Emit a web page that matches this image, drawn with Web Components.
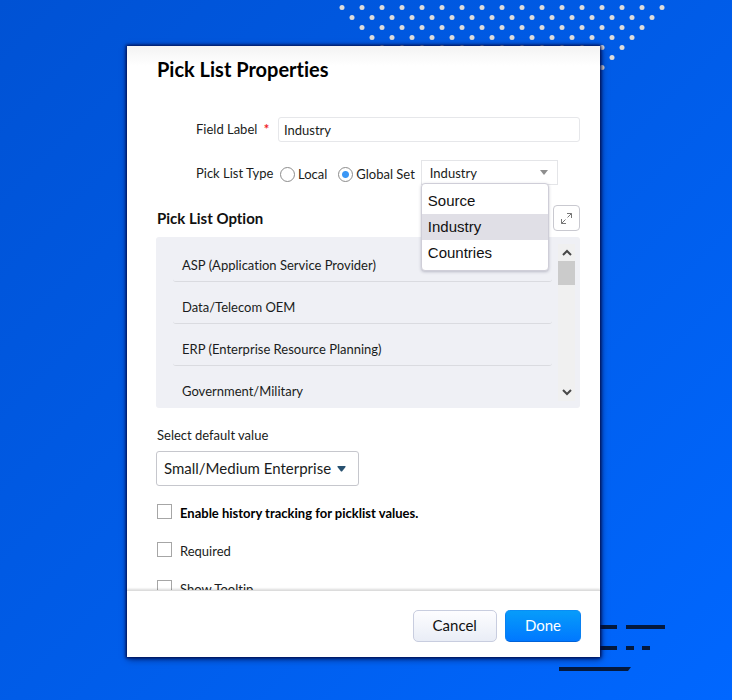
<!DOCTYPE html>
<html lang="en">
<head>
  <meta charset="utf-8">
  <title>Pick List Properties</title>
  <style>
    body {
      margin: 0;
      font-family: Lato, "Liberation Sans", sans-serif;
      font-size: 13px;
      font-variant-ligatures: none;
      color: #1a1c20;
    }
  </style>
</head>
<body>
  <page-stage>
    <properties-dialog heading="Pick List Properties">
      <text-field label="Field Label" value="Industry"></text-field>
      <picklist-type></picklist-type>
      <option-panel heading="Pick List Option">
        <option-row>ASP (Application Service Provider)</option-row>
        <option-row>Data/Telecom OEM</option-row>
        <option-row>ERP (Enterprise Resource Planning)</option-row>
        <option-row>Government/Military</option-row>
      </option-panel>
      <default-value label="Select default value" value="Small/Medium Enterprise"></default-value>
      <check-field strong>Enable history tracking for picklist values.</check-field>
      <check-field>Required</check-field>
      <check-field>Show Tooltip</check-field>
      <action-button slot="actions">Cancel</action-button>
      <action-button slot="actions" primary>Done</action-button>
    </properties-dialog>
  </page-stage>

  <script>
    class PageStage extends HTMLElement {
      connectedCallback() {
        this.attachShadow({ mode: 'open' });
        // triangle of dots, each row is one dot shorter than the last
        let dots = '';
        for (let row = 0; row < 7; row++) {
          for (let x = 4 + row * 10; x <= 324 - row * 10; x += 20) {
            dots += `<circle cx="${x}" cy="${7.5 + row * 10}" r="2.5"/>`;
          }
        }
        this.shadowRoot.innerHTML = `
          <style>
            :host {
              display: grid;
              position: relative;
              box-sizing: border-box;
              height: 100vh;
              padding: 46px 132px 43px 127px;
              background: linear-gradient(135deg, #0052d4, #005ce8 50%, #0067ff);
              overflow: hidden;
            }
            svg {
              position: absolute;
            }
            .dots {
              top: 0;
              right: 66px;
              fill: #dcdcdc;
            }
            .dashes {
              right: 66px;
              bottom: 28px;
              fill: #04193d;
            }
            ::slotted(*) {
              position: relative;
              min-height: 0;
            }
          </style>
          <svg class="dots" width="328" height="72" aria-hidden="true">${dots}</svg>
          <svg class="dashes" width="107" height="48" aria-hidden="true">
            <path d="M30 1h28v4H30zM67 1h39v4H67zM30 22h28v4H30zM67 22h8v4h-8zM83 22h8v4h-8zM0 43h72l-3 4H0z"/>
          </svg>
          <slot></slot>
        `;
      }
    }

    class PropertiesDialog extends HTMLElement {
      connectedCallback() {
        this.attachShadow({ mode: 'open' });
        this.shadowRoot.innerHTML = `
          <style>
            :host {
              display: flex;
              flex-direction: column;
              background: white;
              box-shadow: 0 0 3px 1px #000d4d, 1px 2px 7px rgba(0, 0, 40, 0.6);
            }
            main {
              flex: 1;
              min-height: 0;
              overflow: hidden;
              padding: 11px 20px 0 30px;
              background: linear-gradient(#f3f3f3, white 20px);
            }
            h1 {
              margin: 0 0 35px;
              font-size: 20px;
              line-height: 25px;
              color: #000;
            }
            footer {
              display: flex;
              justify-content: flex-end;
              gap: 8px;
              padding: 19px 19px 15px;
              border-top: 1px solid #dcdcdc;
              box-shadow: 0 -1px 2px rgba(0, 0, 0, 0.15);
              background: white;
            }
          </style>
          <main>
            <h1>${this.getAttribute('heading')}</h1>
            <slot></slot>
          </main>
          <footer><slot name="actions"></slot></footer>
        `;
      }
    }

    class TextField extends HTMLElement {
      connectedCallback() {
        this.attachShadow({ mode: 'open' });
        this.shadowRoot.innerHTML = `
          <style>
            :host {
              display: grid;
              grid-template-columns: 82px 1fr;
              align-items: center;
              padding-left: 39px;
              margin-bottom: 18px;
            }
            label {
              line-height: 18px;
              padding-bottom: 2px;
            }
            span {
              color: #f01e28;
              margin-left: 3px;
              font-weight: bold;
            }
            input {
              box-sizing: border-box;
              width: 100%;
              height: 25px;
              padding: 0 5px;
              border: 1px solid #e6e7ea;
              border-radius: 3px;
              background: white;
              font: inherit;
              color: inherit;
            }
          </style>
          <label for="field">${this.getAttribute('label')} <span>*</span></label>
          <input id="field" type="text" value="${this.getAttribute('value')}">
        `;
      }
    }

    class PicklistType extends HTMLElement {
      connectedCallback() {
        this.attachShadow({ mode: 'open' });
        this.shadowRoot.innerHTML = `
          <style>
            :host {
              display: flex;
              align-items: center;
              padding-left: 39px;
              margin-bottom: 20px;
            }
            .title {
              width: 84px;
              line-height: 18px;
            }
            label {
              display: flex;
              align-items: center;
              gap: 3px;
              margin-right: 11px;
              padding-top: 3px;
              line-height: 18px;
            }
            input {
              appearance: none;
              box-sizing: border-box;
              width: 15px;
              height: 15px;
              margin: 0;
              border: 1px solid #8c8c8c;
              border-radius: 50%;
              background: white;
            }
            input:checked {
              background: radial-gradient(circle, #3b97f5 3px, white 4px);
            }
            .picker {
              position: relative;
              width: 137px;
              margin-left: -5px;
            }
            select {
              appearance: none;
              display: block;
              box-sizing: border-box;
              width: 100%;
              height: 25px;
              padding: 0 8px;
              border: 1px solid #e4e5e8;
              border-radius: 0;
              background: white;
              font: inherit;
              color: inherit;
            }
            .caret {
              position: absolute;
              top: 10px;
              right: 10px;
              fill: #8e8e8e;
            }
            ul {
              position: absolute;
              z-index: 2;
              top: 23px;
              left: 0;
              box-sizing: border-box;
              width: 128px;
              margin: 0;
              padding: 4px 0;
              border: 1px solid #cfced8;
              border-radius: 4px;
              background: white;
              box-shadow: 0 1px 3px rgba(60, 60, 90, 0.3);
              list-style: none;
              font: 15px/26px "Liberation Sans", sans-serif;
              color: #111;
            }
            li {
              padding: 0 6px;
            }
            li[aria-selected="true"] {
              background: #e0dfe6;
            }
          </style>
          <div class="title">Pick List Type</div>
          <label><input type="radio" name="type">Local</label>
          <label><input type="radio" name="type" checked>Global Set</label>
          <div class="picker">
            <select aria-label="Global set">
              <option>Source</option>
              <option selected>Industry</option>
              <option>Countries</option>
            </select>
            <svg class="caret" width="8" height="5" aria-hidden="true"><path d="M0 0h8L4 5z"/></svg>
            <ul role="listbox" aria-label="Global set">
              <li role="option">Source</li>
              <li role="option" aria-selected="true">Industry</li>
              <li role="option">Countries</li>
            </ul>
          </div>
        `;
      }
    }

    class OptionPanel extends HTMLElement {
      connectedCallback() {
        this.attachShadow({ mode: 'open' });
        this.shadowRoot.innerHTML = `
          <style>
            :host {
              display: block;
              margin: 0 0 18px -1px;
            }
            header {
              display: flex;
              justify-content: space-between;
              align-items: center;
              margin-bottom: 6px;
            }
            h2 {
              margin: 0 0 0 1px;
              font-size: 15px;
              line-height: 20px;
              color: #111;
            }
            button {
              display: grid;
              place-items: center;
              width: 27px;
              height: 26px;
              padding: 0;
              border: 1px solid #c9c9d0;
              border-radius: 4px;
              background: white;
            }
            button svg {
              fill: none;
              stroke: #777;
            }
            .panel {
              display: grid;
              grid-template-columns: 1fr 17px;
              gap: 6px;
              box-sizing: border-box;
              height: 171px;
              padding: 3px 5px 0 17px;
              border-radius: 3px;
              background: #eff0f5;
              overflow: hidden;
            }
            ::slotted(:last-of-type) {
              border-bottom-color: transparent;
            }
            .bar {
              display: flex;
              flex-direction: column;
              align-items: center;
              margin: 4px 0 7px;
              background: #f0f0f0;
            }
            .bar svg {
              fill: none;
              stroke: #484848;
              stroke-width: 2;
            }
            .thumb {
              width: 17px;
              height: 24px;
              margin-bottom: auto;
              background: #cbcbcb;
            }
          </style>
          <header>
            <h2>${this.getAttribute('heading')}</h2>
            <button type="button" aria-label="Expand">
              <svg width="13" height="13" aria-hidden="true">
                <path d="M7 1.5h4.500v4.500M11.500 1.500L7.500 5.500M1.500 7v4.500h4.500M1.500 11.500l4-4"/>
              </svg>
            </button>
          </header>
          <div class="panel">
            <div><slot></slot></div>
            <div class="bar">
              <svg width="17" height="17" aria-hidden="true"><path d="M5 11l4-4 4 4"/></svg>
              <div class="thumb"></div>
              <svg width="17" height="17" aria-hidden="true"><path d="M5 6l4 4 4-4"/></svg>
            </div>
          </div>
        `;
      }
    }

    class OptionRow extends HTMLElement {
      connectedCallback() {
        this.attachShadow({ mode: 'open' });
        this.shadowRoot.innerHTML = `
          <style>
            :host {
              display: block;
              padding: 16px 9px 7px;
              border-bottom: 1px solid #dadbe0;
              border-radius: 3px;
              line-height: 18px;
            }
          </style>
          <slot></slot>
        `;
      }
    }

    class DefaultValue extends HTMLElement {
      connectedCallback() {
        this.attachShadow({ mode: 'open' });
        this.shadowRoot.innerHTML = `
          <style>
            :host {
              display: block;
              margin-bottom: 18px;
            }
            label {
              display: block;
              margin-bottom: 7px;
              line-height: 18px;
            }
            .box {
              position: relative;
              width: 203px;
              margin-left: -1px;
            }
            select {
              appearance: none;
              display: block;
              box-sizing: border-box;
              width: 100%;
              height: 35px;
              padding: 0 7px 2px;
              border: 1px solid #c6c7cd;
              border-radius: 3px;
              background: white;
              font: inherit;
              font-size: 15px;
              color: inherit;
            }
            svg {
              position: absolute;
              top: 15px;
              right: 13px;
              fill: #27506f;
            }
          </style>
          <label for="value">${this.getAttribute('label')}</label>
          <div class="box">
            <select id="value"><option>${this.getAttribute('value')}</option></select>
            <svg width="9" height="6" aria-hidden="true"><path d="M1 0h7q1 0 .500 1L5 5.500h-1L.500 1Q0 0 1 0z"/></svg>
          </div>
        `;
      }
    }

    class CheckField extends HTMLElement {
      connectedCallback() {
        this.attachShadow({ mode: 'open' });
        this.shadowRoot.innerHTML = `
          <style>
            :host {
              display: block;
              margin-bottom: 20px;
            }
            :host([strong]) {
              font-weight: bold;
              color: #000;
            }
            label {
              display: flex;
              gap: 8px;
              line-height: 18px;
            }
            input {
              appearance: none;
              box-sizing: border-box;
              width: 15px;
              height: 15px;
              margin: 0;
              border: 1px solid #a6a6a6;
              background: white;
            }
          </style>
          <label><input type="checkbox"><slot></slot></label>
        `;
      }
    }

    class ActionButton extends HTMLElement {
      connectedCallback() {
        this.attachShadow({ mode: 'open' });
        this.shadowRoot.innerHTML = `
          <style>
            :host {
              display: block;
            }
            button {
              display: block;
              box-sizing: border-box;
              height: 32px;
              padding: 0 19px 2px;
              border: 1px solid #c8cddf;
              border-radius: 5px;
              background: linear-gradient(#fdfdff, #e9edf6);
              font: inherit;
              font-size: 15px;
              color: #111;
            }
            :host([primary]) button {
              border-color: #0a8df5 #0a80f0 #0062d8;
              background: linear-gradient(#079cfa, #0078ff);
              color: white;
            }
          </style>
          <button type="button"><slot></slot></button>
        `;
      }
    }

    customElements.define('page-stage', PageStage);
    customElements.define('properties-dialog', PropertiesDialog);
    customElements.define('text-field', TextField);
    customElements.define('picklist-type', PicklistType);
    customElements.define('option-panel', OptionPanel);
    customElements.define('option-row', OptionRow);
    customElements.define('default-value', DefaultValue);
    customElements.define('check-field', CheckField);
    customElements.define('action-button', ActionButton);
  </script>
</body>
</html>
